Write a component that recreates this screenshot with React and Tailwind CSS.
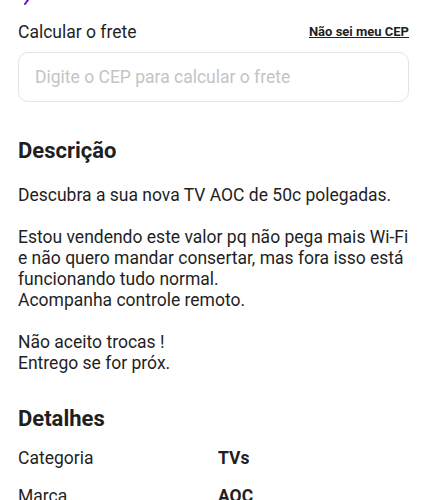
export default function App() {
  const descricao =
    "Descubra a sua nova TV AOC de 50c polegadas.\n\nEstou vendendo este valor pq não pega mais Wi-Fi e não quero mandar consertar, mas fora isso está funcionando tudo normal.\nAcompanha controle remoto.\n\nNão aceito trocas !\nEntrego se for próx.";

  const detalhes = [
    { label: "Categoria", value: "TVs" },
    { label: "Marca", value: "AOC" },
  ];

  return (
    <div
      className="w-[427px] h-[500px] overflow-hidden bg-white text-[#1f1f1f]"
      style={{ fontFamily: "Roboto, 'Noto Sans', sans-serif" }}
    >
      {/* tail of the purple element above the fold */}
      <div className="h-[18px] px-[18px]">
        <svg width="14" height="6" viewBox="0 0 14 6">
          <path d="M10 0 L7 4" stroke="#6d0ad6" strokeWidth="2" strokeLinecap="round" />
        </svg>
      </div>

      {/* frete */}
      <div className="px-[18px]">
        <div className="flex items-center justify-between h-[28px]">
          <span className="text-[17.5px]">Calcular o frete</span>
          <a className="text-[13px] font-bold underline text-[#1f1f1f]">Não sei meu CEP</a>
        </div>
        <div className="mt-[6px] h-[50px] rounded-[10px] border border-[#e3e3e3] flex items-center px-[16px]">
          <span className="text-[17.5px] text-[#c4c4c4]">Digite o CEP para calcular o frete</span>
        </div>
      </div>

      {/* descrição */}
      <div className="px-[18px] mt-[35px]">
        <h2 className="text-[22px] font-bold leading-[28px]">Descrição</h2>
        <p className="mt-[20px] text-[17.5px] leading-[21px] whitespace-pre-line">{descricao}</p>
      </div>

      {/* detalhes */}
      <div className="px-[18px] mt-[31px]">
        <h2 className="text-[22px] font-bold leading-[28px]">Detalhes</h2>
        <div className="mt-[15px] flex flex-col gap-[17px]">
          {detalhes.map((d) => (
            <div key={d.label} className="flex text-[17.5px] leading-[21px]">
              <span className="w-[200px]">{d.label}</span>
              <span className="font-bold">{d.value}</span>
            </div>
          ))}
        </div>
      </div>
    </div>
  );
}
